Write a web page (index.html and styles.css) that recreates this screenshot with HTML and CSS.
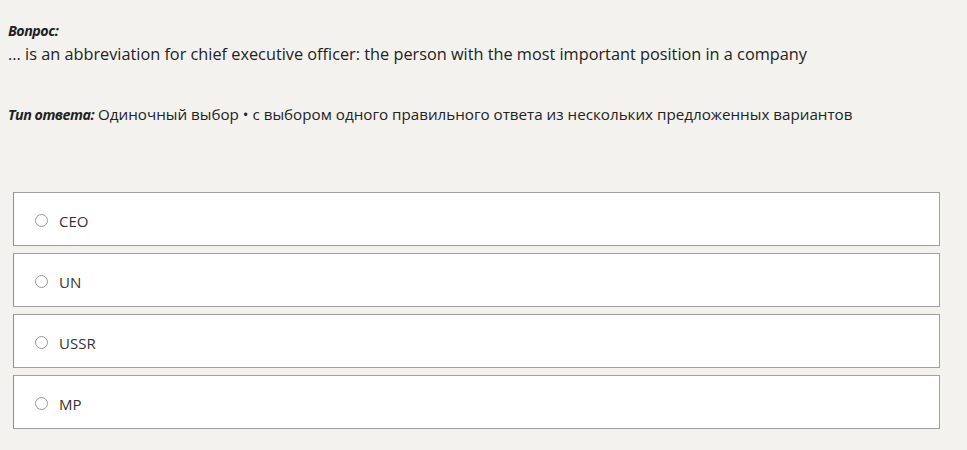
FILE: index.html
```html
<!DOCTYPE html>
<html>
<head>
    <meta charset="utf-8">
    <link rel="stylesheet" href="styles.css">
</head>
<body>
    <div class="question">
        <div class="label">Вопрос:</div>
        <div class="text">... is an abbreviation for chief executive officer: the person with the most important position in a company</div>
    </div>

    <div class="answer-type">
        <span class="label">Тип ответа:</span> Одиночный выбор • с выбором одного правильного ответа из нескольких предложенных вариантов
    </div>

    <div class="options">
        <label class="option"><span class="radio"></span>CEO</label>
        <label class="option"><span class="radio"></span>UN</label>
        <label class="option"><span class="radio"></span>USSR</label>
        <label class="option"><span class="radio"></span>MP</label>
    </div>
</body>
</html>
```

FILE: styles.css
```css
body {
    margin: 0;
    padding: 0 27px 0 8px;
    background-color: #f3f2ef;
    color: #222;
    font-family: 'Open Sans', sans-serif;
}

.label {
    font-weight: bold;
    font-style: italic;
    font-size: 14.3px;
    letter-spacing: -0.5px;
}

.question {
    padding-top: 21px;
}

.question .text {
    font-size: 16.3px;
    line-height: 22px;
    margin-top: 3px;
}

.answer-type {
    margin-top: 39px;
    font-size: 15.2px;
    line-height: 20px;
}

.options {
    margin: 67px 0 0 5px;
    display: flex;
    flex-direction: column;
    gap: 7px;
}

.option {
    box-sizing: border-box;
    display: flex;
    align-items: center;
    height: 54px;
    padding-top: 3px;
    background: #fff;
    border: 1px solid #a0a0a0;
    border-left-color: #909090;
    font-size: 15px;
    color: #333;
}

.radio {
    width: 11px;
    height: 11px;
    border: 1px solid #999;
    border-radius: 50%;
    margin: 0 11px 0 21px;
}
```
